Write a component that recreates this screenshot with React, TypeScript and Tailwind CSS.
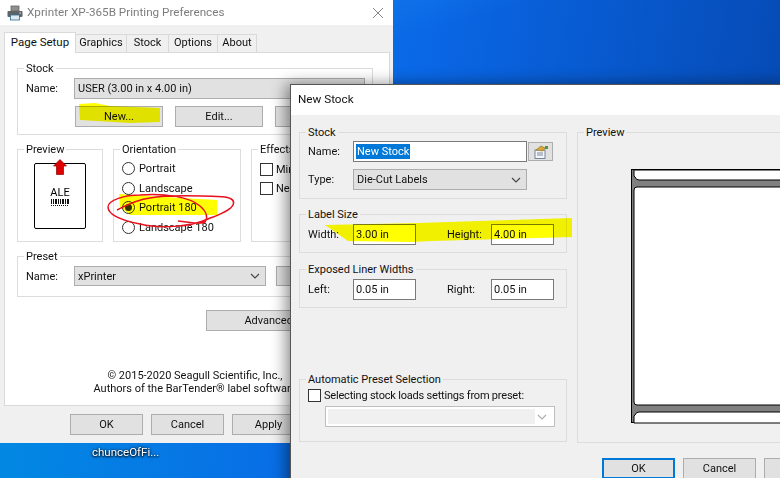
import type { ReactNode } from "react"

const font = "font-['Roboto','Noto_Sans',sans-serif]"

const Group = ({ title, className, bg = "bg-white", children }: { title: string; className: string; bg?: string; children?: ReactNode }) => (
    <div className={`relative border border-[#dcdcdc] ${className}`}>
        <span className={`absolute -top-[8px] left-[6px] px-[2px] leading-[16px] whitespace-nowrap ${bg}`}>{title}</span>
        {children}
    </div>
)

const Button = ({ label, className }: { label: string; className: string }) => (
    <div className={`flex items-center justify-center h-[21px] pt-[2px] bg-[#e1e1e1] border border-[#adadad] shrink-0 ${className}`}>{label}</div>
)

const Chevron = ({ color = "#444" }: { color?: string }) => (
    <svg width="10" height="6" viewBox="0 0 10 6" fill="none" stroke={color} strokeWidth="1.1"><path d="M1 1l4 4 4-4" /></svg>
)

const Select = ({ label, className }: { label: string; className: string }) => (
    <div className={`flex items-center justify-between pl-[3px] pr-[5px] h-[21px] bg-[#e1e1e1] border border-[#adadad] shrink-0 ${className}`}>
        <span className="pt-[2px]">{label}</span>
        <Chevron />
    </div>
)

const TextBox = ({ value, className }: { value: string; className: string }) => (
    <div className={`flex items-center pl-[2px] pt-[2px] h-[21px] bg-white border border-[#7a7a7a] shrink-0 ${className}`}>{value}</div>
)

const Label = ({ text, className }: { text: string; className: string }) => (
    <span className={`pt-[2px] shrink-0 ${className}`}>{text}</span>
)

const Radio = ({ label, checked }: { label: string; checked?: boolean }) => (
    <div className="flex items-center h-[13px] gap-[4px]">
        <div className="flex items-center justify-center w-[13px] h-[13px] rounded-full border border-[#333] bg-white">
            {checked && <div className="w-[7px] h-[7px] rounded-full bg-[#333]" />}
        </div>
        <span className="pt-[2px]">{label}</span>
    </div>
)

const Check = ({ label, labelClass = "" }: { label: string; labelClass?: string }) => (
    <div className="flex items-center gap-[3px] h-[13px]">
        <div className="w-[13px] h-[13px] border border-[#333] bg-white shrink-0" />
        <span className={`whitespace-nowrap pt-[2px] ${labelClass}`}>{label}</span>
    </div>
)

const Tab = ({ label, w }: { label: string; w: string }) => (
    <div className={`flex items-center justify-center h-[18px] bg-[#f0f0f0] border border-b-0 border-l-0 border-[#d9d9d9] ${w}`}>{label}</div>
)

const PrinterWindow = () => (
    <div className="absolute left-0 top-0 w-[393px] h-[443px] flex flex-col bg-[#f0f0f0] text-[#111]">
        <div className="flex items-center justify-between h-[25px] pl-[7px] pr-[10px] bg-white shrink-0">
            <div className="flex items-center gap-[4px] text-[#7d7d7d]">
                <svg width="16" height="16" viewBox="0 0 16 16">
                    <rect x="4" y="1" width="8" height="5" fill="#8e8e8e" stroke="#666" strokeWidth="0.8" />
                    <rect x="0.5" y="6" width="15" height="6" rx="1" fill="#5f6366" />
                    <rect x="3.5" y="10" width="9" height="5" fill="#dfe9f2" stroke="#2f6d8c" strokeWidth="0.8" />
                    <rect x="12.5" y="7.5" width="1.5" height="1.2" fill="#c9d6e0" />
                </svg>
                <span className="text-[11.7px] leading-none">Xprinter XP-365B Printing Preferences</span>
            </div>
            <svg width="10" height="10" viewBox="0 0 10 10" stroke="#777" strokeWidth="0.9"><path d="M0 0l10 10M10 0L0 10" /></svg>
        </div>
        <div className="flex items-end h-[27px] pl-[4px] shrink-0">
            <div className="flex items-center justify-center w-[72px] h-[21px] -mb-px z-10 bg-white border border-b-0 border-[#d9d9d9] text-[11.5px]">Page Setup</div>
            <Tab label="Graphics" w="w-[51px]" />
            <Tab label="Stock" w="w-[42px]" />
            <Tab label="Options" w="w-[49px]" />
            <Tab label="About" w="w-[39px]" />
        </div>
        <div className="relative flex flex-col ml-[4px] mr-[3px] h-[354px] bg-white border border-[#d9d9d9] shrink-0 pl-[12px] pr-[16px] pt-[15px]">
            <Group title="Stock" className="h-[67px] shrink-0 pl-[8px] pt-[9px]">
                <div className="flex items-center gap-[16px]">
                    <Label text="Name:" className="w-[32px]" />
                    <div className="flex items-center pl-[3px] pt-[2px] w-[291px] h-[21px] bg-[#e1e1e1] border border-[#adadad] shrink-0">USER (3.00 in x 4.00 in)</div>
                </div>
                <div className="flex gap-[12px] mt-[7px] ml-[49px]">
                    <Button label="New..." className="w-[88px]" />
                    <Button label="Edit..." className="w-[88px]" />
                    <Button label="" className="w-[88px]" />
                </div>
            </Group>
            <div className="flex gap-[10px] mt-[14px] shrink-0">
                <Group title="Preview" className="w-[86px] h-[93px] shrink-0">
                    <div className="relative w-[52px] h-[66px] mt-[13px] ml-[16px] rounded-[2px] border border-black flex flex-col items-center pt-[24px]">
                        <span className="text-[11px] leading-[10px] text-black">ALE</span>
                        <svg width="18" height="7" viewBox="0 0 18 7" fill="#111" className="mt-[1px]">
                            <path d="M0 0h1v5H0zM2 0h1v5H2zM4 0h2v5H4zM7 0h1v5H7zM9 0h1v5H9zM11 0h2v5h-2zM14 0h1v5h-1zM16 0h2v5h-2zM0 6h1v1H0zM2 6h1v1H2zM4 6h1v1H4zM6 6h1v1H6zM8 6h1v1H8zM10 6h1v1h-1zM12 6h1v1h-1zM14 6h1v1h-1zM16 6h1v1h-1z" />
                        </svg>
                        <svg width="14" height="16" viewBox="0 0 14 16" className="absolute -top-[5px] left-[18px]">
                            <path d="M7 0.500l6.500 6.500H10.500v8.500h-7V7H0.500z" fill="#e00000" stroke="#900000" strokeWidth="0.7" />
                        </svg>
                    </div>
                </Group>
                <Group title="Orientation" className="w-[128px] h-[93px] shrink-0 pl-[8px] pt-[12px] flex flex-col gap-[6.500px]">
                    <Radio label="Portrait" />
                    <Radio label="Landscape" />
                    <Radio label="Portrait 180" checked />
                    <Radio label="Landscape 180" />
                </Group>
                <Group title="Effects" className="w-[110px] h-[93px] shrink-0 pl-[8px] pt-[13px] flex flex-col gap-[6px]">
                    <Check label="Mirror" labelClass="w-[14px] overflow-hidden" />
                    <Check label="Negative" labelClass="w-[14px] overflow-hidden" />
                </Group>
            </div>
            <Group title="Preset" className="h-[41px] mt-[14px] shrink-0 pl-[8px] pt-[9px]">
                <div className="flex items-center">
                    <Label text="Name:" className="w-[48px]" />
                    <Select label="xPrinter" className="w-[192px] !h-[20px]" />
                    <Button label="" className="w-[88px] ml-[10px] !h-[20px]" />
                </div>
            </Group>
            <div className="flex mt-[13px] ml-[189px] shrink-0">
                <Button label="Advanced..." className="w-[134px]" />
            </div>
            <div className="flex flex-col items-center mt-[38px] leading-[13px] text-center whitespace-nowrap">
                <span>© 2015-2020 Seagull Scientific, Inc.,</span>
                <span>Authors of the BarTender® label software</span>
            </div>
        </div>
        <div className="flex gap-[8px] pl-[70px] pt-[8px]">
            <Button label="OK" className="w-[73px]" />
            <Button label="Cancel" className="w-[73px]" />
            <Button label="Apply" className="w-[73px]" />
        </div>
        <svg className="absolute left-0 top-0 pointer-events-none" width="393" height="300" viewBox="0 0 393 300" fill="none">
            <g className="mix-blend-multiply" fill="#ffff00">
                <path d="M79 104l16-1 15 3 50 2v14l-30 1-50-3z" />
                <path d="M119 194l46 3 52 3v15h-87l-10-8z" />
            </g>
            <path d="M117 210C125 206 135 200 150 198C170 194 205 196 225 197C232 198 235 201 233 205C230 211 218 215 208 219C190 227 160 229 140 224C125 221 108 216 108 207C108 200 125 195 140 195C165 193 190 197 200 206C207 212 208 218 205 222C200 225 190 222 178 221" stroke="#e8101c" strokeWidth="1.500" />
        </svg>
    </div>
)

const StockWindow = () => (
    <div className="absolute left-[290px] top-[84px] w-[500px] h-[410px] flex flex-col bg-[#f0f0f0] text-[#111] border border-[#555] shadow-[-4px_0_14px_rgba(0,0,0,0.45)]">
        <div className="flex items-center h-[30px] pl-[7px] bg-white shrink-0 text-[11.7px] text-[#111]">New Stock</div>
        <div className="flex pl-[8px] pt-[17px]">
            <div className="flex flex-col w-[268px] shrink-0">
                <Group title="Stock" bg="bg-[#f0f0f0]" className="h-[67px] shrink-0 pl-[8px] pt-[8px]">
                    <div className="flex items-center">
                        <Label text="Name:" className="w-[45px]" />
                        <div className="flex items-center pl-[2px] w-[174px] h-[21px] bg-white border border-[#7a7a7a] shrink-0">
                            <span className="px-[1px] h-[15px] leading-[15px] bg-[#0078d7] text-white">New Stock</span>
                        </div>
                        <div className="flex items-center justify-center w-[25px] h-[19px] ml-[1px] bg-[#e1e1e1] border border-[#adadad]">
                            <svg width="16" height="14" viewBox="0 0 16 14">
                                <rect x="2" y="5" width="10" height="8.500" fill="#f4f6fa" stroke="#5a6a86" strokeWidth="0.8" />
                                <path d="M4 8h6M4 10h6" stroke="#5a6a86" strokeWidth="0.8" />
                                <path d="M3 5l5-4 4 2-2 3z" fill="#d8a93a" stroke="#8a6a1e" strokeWidth="0.6" />
                                <path d="M12 1h3v3h-3z" fill="#4a9a3a" />
                            </svg>
                        </div>
                    </div>
                    <div className="flex items-center mt-[7px]">
                        <Label text="Type:" className="w-[45px]" />
                        <Select label="Die-Cut Labels" className="w-[174px]" />
                    </div>
                </Group>
                <Group title="Label Size" bg="bg-[#f0f0f0]" className="h-[39px] mt-[15px] shrink-0 pl-[8px] pt-[9px]">
                    <div className="flex items-center">
                        <Label text="Width:" className="w-[45px]" />
                        <TextBox value="3.00 in" className="w-[63px]" />
                        <Label text="Height:" className="w-[44px] ml-[31px]" />
                        <TextBox value="4.00 in" className="w-[63px]" />
                    </div>
                </Group>
                <Group title="Exposed Liner Widths" bg="bg-[#f0f0f0]" className="h-[39px] mt-[16px] shrink-0 pl-[8px] pt-[9px]">
                    <div className="flex items-center">
                        <Label text="Left:" className="w-[45px]" />
                        <TextBox value="0.05 in" className="w-[63px]" />
                        <Label text="Right:" className="w-[44px] ml-[31px]" />
                        <TextBox value="0.05 in" className="w-[63px]" />
                    </div>
                </Group>
                <Group title="Automatic Preset Selection" bg="bg-[#f0f0f0]" className="h-[63px] mt-[71px] shrink-0 pl-[8px] pt-[9px]">
                    <Check label="Selecting stock loads settings from preset:" labelClass="tracking-[-0.2px]" />
                    <div className="flex items-center justify-between w-[230px] h-[21px] mt-[4px] ml-[17px] p-[2px] pr-[7px] bg-white border border-[#bfbfbf]">
                        <div className="w-[207px] h-full bg-[#f0f0f0]" />
                        <Chevron color="#aaa" />
                    </div>
                </Group>
            </div>
            <div className="flex flex-col ml-[10px]">
                <Group title="Preview" bg="bg-[#f0f0f0]" className="w-[240px] h-[311px] shrink-0 overflow-visible">
                    <svg className="absolute left-[53px] top-[36px]" width="190" height="255" viewBox="0 0 190 255">
                        <rect x="0.500" y="0.500" width="200" height="253" fill="#808080" stroke="#000" />
                        <path d="M3 1h187v10H8q-3 0-4-3l-1-1z" fill="#fff" stroke="#000" />
                        <path d="M190 18H6q-3 0-3 3v212q0 3 3 3h184z" fill="#fff" stroke="#000" />
                        <path d="M3 254v-7l1-1q1-3 4-3h182v11z" fill="#fff" stroke="#000" />
                    </svg>
                </Group>
                <div className="flex gap-[8px] mt-[15px] ml-[25px]">
                    <Button label="OK" className="w-[73px] !border-2 !border-[#0078d7]" />
                    <Button label="Cancel" className="w-[73px]" />
                    <Button label="" className="w-[73px]" />
                </div>
            </div>
        </div>
        <svg className="absolute left-[-1px] top-[-1px] pointer-events-none mix-blend-multiply" width="300" height="170" viewBox="0 0 300 170">
            <path d="M35 141l93-2 154-5v19l-140 4-19 1-65-1z" fill="#ffff00" />
        </svg>
    </div>
)

const App = () => (
    <div className={`relative w-[780px] h-[478px] overflow-hidden text-[11px] ${font} bg-[linear-gradient(165deg,transparent_0,transparent_62px,rgba(40,150,250,0.35)_63px,rgba(40,150,250,0)_140px),linear-gradient(100deg,#0090e2_0%,#0a67e6_50%,#0546ad_100%)]`}>
        <div className="absolute left-[92px] top-[444px] text-white text-[11.5px] [text-shadow:0_0_3px_#000,0_1px_2px_#000]">chunceOfFi...</div>
        <PrinterWindow />
        <StockWindow />
    </div>
)

export default App
